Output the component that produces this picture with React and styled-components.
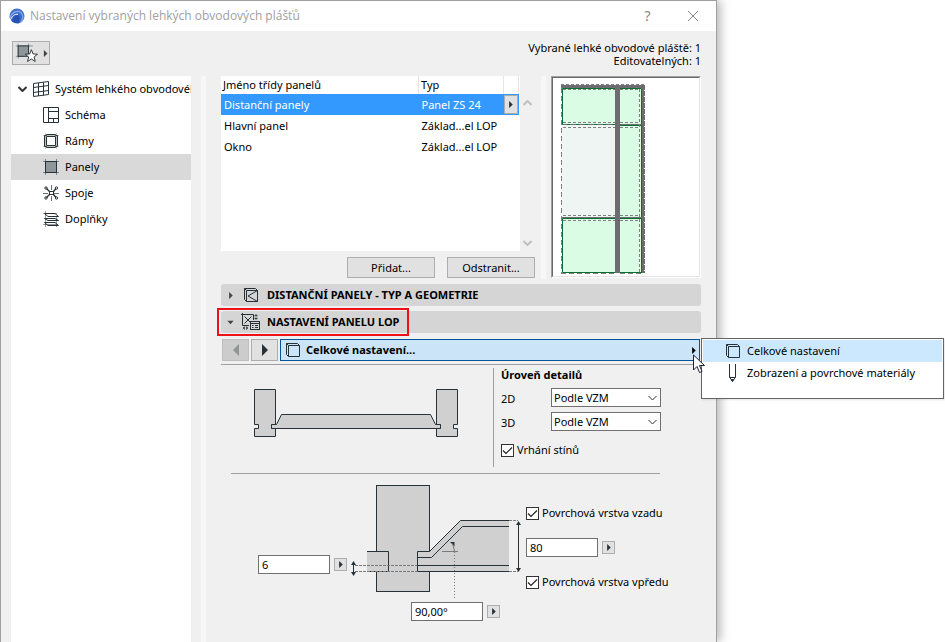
import React from 'react';
import styled, { createGlobalStyle } from 'styled-components';

const INK = '#263238';

const GlobalStyle = createGlobalStyle`
    * {
        box-sizing: border-box;
    }
    body {
        margin: 0;
        background: white;
        color: black;
        font: 11px/14px "Noto Sans", "Open Sans", sans-serif;
    }
    button, input, select {
        font: inherit;
        color: inherit;
        margin: 0;
    }
`;

/* ---------- window ---------- */

const Page = styled.div`
    display: grid;
    grid-template-columns: minmax(0, 1fr) 228px;
    min-height: 100vh;
`;

const Dialog = styled.main`
    display: flex;
    flex-direction: column;
    background: #f0f0f0;
    border: 1px solid #a0a0a0;
    border-bottom: none;
    box-shadow: 3px 0 10px rgba(0, 0, 0, 0.3);
`;

const TitleBar = styled.header`
    display: flex;
    align-items: center;
    height: 30px;
    padding: 0 15px 0 8px;
    background: white;
    color: #a0a0a0;
`;

const Title = styled.h1`
    flex: 1;
    margin: 0 0 0 5px;
    font-family: "Open Sans", "Noto Sans", sans-serif;
    font-size: 12px;
    font-weight: normal;
    line-height: 16px;
`;

const WindowButton = styled.button`
    display: grid;
    place-items: center;
    width: 17px;
    height: 20px;
    margin-left: 28px;
    padding: 0;
    border: none;
    background: none;
    color: #858585;
    font-size: 14px;
`;

const Toolbar = styled.div`
    display: flex;
    justify-content: space-between;
    align-items: flex-start;
    height: 45px;
    padding: 10px 15px 0 11px;
`;

const FavoriteButton = styled.button`
    display: flex;
    align-items: center;
    gap: 3px;
    width: 38px;
    height: 24px;
    padding: 0;
    border: 1px solid #adadad;
    background: #e1e1e1;
    color: #444444;
`;

const Summary = styled.p`
    margin: 0;
    line-height: 13px;
    text-align: right;
`;

const Body = styled.div`
    display: flex;
    flex: 1;
    padding: 0 15px 0 10px;
`;

const Divider = styled.div`
    width: 5px;
    background: #f7f7f7;
`;

/* ---------- tree ---------- */

const Tree = styled.nav`
    width: 180px;
    margin-right: 10px;
    overflow: hidden;
    background: white;
`;

const TreeItem = styled.a`
    display: flex;
    align-items: center;
    gap: 6px;
    height: 26px;
    padding-left: ${props => (props.$root ? '7px' : '32px')};
    background: ${props => (props.$active ? '#d9d9d9' : 'none')};
    color: inherit;
    text-decoration: none;
    white-space: nowrap;
    svg {
        flex: none;
    }
`;

/* ---------- class list ---------- */

const Main = styled.section`
    flex: 1;
    min-width: 0;
    margin-left: 15px;
`;

const TopPanel = styled.div`
    display: flex;
    height: 203px;
    gap: 5px;
`;

const ListColumn = styled.div`
    flex: 1;
    margin-right: 1px;
`;

const ListArea = styled.div`
    display: flex;
    height: 175px;
`;

const ListBox = styled.div`
    flex: 1;
    padding-right: 1px;
    background: white;
`;

const ClassTable = styled.table`
    width: 100%;
    table-layout: fixed;
    border-collapse: collapse;
    text-align: left;
`;

const NameCol = styled.col``;
const TypeCol = styled.col`
    width: 85px;
`;
const MenuCol = styled.col`
    width: 15px;
`;

const HeadCell = styled.th`
    height: 18px;
    padding: 0 2px;
    border-right: 1px solid #e5e5e5;
    font-weight: normal;
`;

const ClassRow = styled.tr`
    height: 21px;
    background: ${props => (props.$selected ? '#3399ff' : 'none')};
    color: ${props => (props.$selected ? 'white' : 'black')};
`;

const Cell = styled.td`
    padding: 0 0 0 3px;
    white-space: nowrap;
`;

const MenuCell = styled.td`
    padding: 0;
`;

const ScrollBar = styled.div`
    display: flex;
    flex-direction: column;
    justify-content: space-between;
    align-items: center;
    width: 15px;
    padding: 24px 0 5px;
`;

const Buttons = styled.div`
    display: flex;
    justify-content: flex-end;
    gap: 12px;
    margin-top: 6px;
`;

const PushButton = styled.button`
    width: 88px;
    height: 21px;
    padding: 0;
    border: 1px solid #adadad;
    background: #e1e1e1;
`;

const ArrowButton = styled.button`
    display: grid;
    place-items: center;
    width: ${props => props.$width || '13px'};
    height: ${props => props.$height || '13px'};
    padding: 0;
    border: 1px solid ${props => (props.disabled ? '#bfbfbf' : '#adadad')};
    background: ${props => (props.disabled ? '#cccccc' : '#e1e1e1')};
    color: ${props => (props.disabled ? '#8f9496' : INK)};
`;

const Preview = styled.div`
    width: 150px;
    height: 202px;
    border: 1px solid;
    border-color: #a0a0a0 white white #a0a0a0;
    background: white;
`;

const PreviewInner = styled.div`
    height: 100%;
    border: 1px solid;
    border-color: #696969 #e3e3e3 #e3e3e3 #696969;
    svg {
        display: block;
    }
`;

/* ---------- collapsible sections ---------- */

const SectionHeader = styled.button`
    position: relative;
    display: flex;
    align-items: center;
    width: 100%;
    height: 22px;
    margin-top: 5px;
    padding: 0 0 0 5px;
    border: none;
    border-radius: 3px;
    background: #d5d5d5;
    font-weight: bold;
    text-align: left;
    > svg {
        color: #444444;
    }
`;

const SectionIcon = styled.span`
    display: grid;
    place-items: center;
    width: 20px;
    margin: 0 6px;
`;

const Highlight = styled.span`
    position: absolute;
    inset: -3px auto -3px -4px;
    width: 192px;
    border: 2px solid #f01018;
`;

const PageNav = styled.div`
    display: flex;
    gap: 2px;
    margin: 6px 1px 0;
    padding-bottom: 3px;
`;

const PagePicker = styled.div`
    position: relative;
    flex: 1;
`;

const PageButton = styled.button`
    display: flex;
    align-items: center;
    width: 100%;
    height: 22px;
    padding: 0 1px 0 5px;
    border: 1px solid #005499;
    background: #cce4f7;
    font-weight: bold;
    text-align: left;
    span {
        flex: 1;
        padding-left: 5px;
    }
`;

const Menu = styled.div`
    position: absolute;
    top: -1px;
    left: calc(100% + 1px);
    z-index: 2;
    width: 243px;
    height: 61px;
    padding: 1px;
    border: 1px solid #646464;
    background: white;
    box-shadow: 1px 1px 2px rgba(0, 0, 0, 0.1);
`;

const MenuItem = styled.button`
    display: flex;
    align-items: center;
    gap: 6px;
    width: 100%;
    height: 22px;
    padding: 0 0 0 23px;
    border: none;
    background: ${props => (props.$active ? '#cce8ff' : 'none')};
`;

const Pointer = styled.svg`
    position: absolute;
    top: 15px;
    right: -6px;
    z-index: 3;
`;

/* ---------- settings ---------- */

const Details = styled.div`
    display: flex;
    padding-top: 3px;
    border-top: 1px solid #a0a0a0;
`;

const SectionDrawing = styled.div`
    width: 272px;
    padding: 19px 0 0 31px;
`;

const DetailLevel = styled.fieldset`
    min-width: 0;
    height: 99px;
    margin: 0;
    padding: 0 0 0 7px;
    border: none;
    border-left: 1px solid #a0a0a0;
`;

const Legend = styled.legend`
    float: left;
    margin-bottom: 6px;
    padding: 0;
    font-weight: bold;
`;

const LevelRow = styled.label`
    display: flex;
    clear: both;
    align-items: center;
    height: 19px;
    margin-bottom: 5px;
`;

const LevelName = styled.span`
    width: 50px;
    padding-top: 2px;
`;

const SelectWrap = styled.span`
    display: grid;
    align-items: center;
    width: 110px;
    > * {
        grid-area: 1 / 1;
    }
    svg {
        justify-self: end;
        margin-right: 4px;
        pointer-events: none;
    }
`;

const Select = styled.select`
    appearance: none;
    width: 100%;
    height: 19px;
    padding: 0 16px 0 2px;
    border: 1px solid #707070;
    border-radius: 0;
    background: white;
`;

const CheckLabel = styled.label`
    display: flex;
    align-items: center;
    gap: 3px;
    height: 14px;
    margin-top: ${props => (props.$spaced ? '12px' : '0')};
    white-space: nowrap;
`;

const CheckBox = styled.span`
    display: grid;
    place-items: center;
    > * {
        grid-area: 1 / 1;
    }
    input {
        appearance: none;
        width: 13px;
        height: 13px;
        border: 1px solid #333333;
        background: white;
    }
    svg {
        visibility: hidden;
        pointer-events: none;
    }
    input:checked + svg {
        visibility: visible;
    }
`;

const Rule = styled.hr`
    height: 1px;
    margin: 6px 41px 10px 10px;
    border: none;
    background: #a0a0a0;
`;

const JointPanel = styled.div`
    display: flex;
    padding-left: 37px;
`;

const OffsetColumn = styled.div`
    width: 92px;
    padding-top: 71px;
`;

const JointColumn = styled.div`
    width: 172px;
    svg {
        display: block;
    }
`;

const AngleRow = styled.div`
    margin: 2px 0 0 61px;
`;

const LayerColumn = styled.div`
    display: flex;
    flex-direction: column;
    gap: 18px;
    padding: 22px 0 0 4px;
`;

const FieldRow = styled.div`
    display: flex;
    align-items: center;
    gap: 4px;
`;

const TextInput = styled.input`
    width: 72px;
    height: 19px;
    padding: 0 3px;
    border: 1px solid #707070;
    background: white;
`;

/* ---------- icons ---------- */

const Icon = ({ size = 16, children }) => (
    <svg width={size} height={size} viewBox={`0 0 ${size} ${size}`} fill="none" stroke={INK} aria-hidden="true">
        {children}
    </svg>
);

const Triangle = ({ dir = 'right', big }) => {
    const points = {
        right: big ? '4,1 10,7 4,13' : '3,1 7,5 3,9',
        left: '10,1 4,7 10,13',
        down: '1,3 8,3 4.5,7',
    };
    const size = big ? 14 : 9;
    return (
        <svg width={size} height={size} viewBox={big ? '0 0 14 14' : '0 0 9 10'} fill="currentColor" aria-hidden="true">
            <polygon points={points[dir]} />
        </svg>
    );
};

const Chevron = ({ up, color = '#333333', strokeWidth = 1 }) => (
    <svg width="9" height="6" viewBox="0 0 9 6" fill="none" stroke={color} strokeWidth={strokeWidth} aria-hidden="true">
        <path d={up ? 'M0.5 5 L4.5 1 L8.5 5' : 'M0.5 1 L4.5 5 L8.5 1'} />
    </svg>
);

const LogoIcon = () => (
    <svg width="16" height="16" viewBox="0 0 16 16" aria-hidden="true">
        <circle cx="8" cy="8" r="7.5" fill="#3f6bc9" />
        <path d="M1 10C3 4 8 1.500 12 4.500C14.500 7 14.500 11 12 14" fill="none" stroke="#7fa6ea" strokeWidth="1.500" />
        <path d="M3 13.500C4.500 9 7 6 9.500 7.500C11.500 9 11 12 9.500 15.500Z" fill="#2750b4" />
        <path d="M0.500 13C3 8.500 6 5 9 6.500" fill="none" stroke="white" />
    </svg>
);

const FavoriteIcon = () => (
    <Icon size={26}>
        <path d="M3 5.500H21M5.500 3V19M16.500 3V8M3 16.500H11" strokeWidth="0.500" />
        <rect x="5.500" y="5.500" width="11" height="11" fill="#8f9699" />
        <path
            d="M19.500 9.500L21.300 14L26 14.300L22.400 17.200L23.600 22L19.500 19.400L15.400 22L16.600 17.200L13 14.300L17.700 14Z"
            fill="white"
        />
    </Icon>
);

const SystemIcon = () => (
    <Icon>
        <path d="M0.500 2.500L15.500 0.500V13.500L0.500 15.500ZM5.500 2V15M10.500 1.500V14.500M0.500 6.500L15.500 4.500M0.500 11.500L15.500 9.500" />
    </Icon>
);

const SchemeIcon = () => (
    <Icon>
        <path d="M0.500 0.500H15.500V15.500H0.500ZM5.500 0.500V15.500M5.500 4.500H15.500M5.500 11.500H15.500M10.500 11.500V15.500" />
    </Icon>
);

const FramesIcon = () => (
    <Icon>
        <path d="M3.500 3.500H12.500V12.500H3.500ZM1.500 2.500V13.500M14.500 2.500V13.500M3.500 1.500H12.500M3.500 14.500H12.500M1.500 2.500H3.500V1.500M14.500 2.500H12.500V1.500M1.500 13.500H3.500V14.500M14.500 13.500H12.500V14.500" />
        <path d="M0 2.500H16M0 13.500H16M2.500 0V16M13.500 0V16" strokeWidth="0.300" />
    </Icon>
);

const PanelsIcon = () => (
    <Icon>
        <path d="M0 2.500H16M0 13.500H16M2.500 0V16M13.500 0V16" strokeWidth="0.500" />
        <rect x="2.500" y="2.500" width="11" height="11" fill="#8f9699" />
    </Icon>
);

const JointsIcon = () => (
    <Icon>
        <path d="M8.500 0V5M8.500 11V16M0 8.500H5M11 8.500H16" strokeWidth="0.700" />
        <rect x="6.500" y="6.500" width="4" height="3" />
        <path d="M6.500 6.500L3.500 3.500M10.500 6.500L13 3.500M6.500 9.500L3.500 12.500M10.500 9.500L13 12.500" strokeWidth="1.400" />
        <circle cx="3" cy="3" r="1.200" />
        <circle cx="13.500" cy="3" r="1.200" />
        <circle cx="3" cy="13" r="1.200" />
        <circle cx="13.500" cy="13" r="1.200" />
    </Icon>
);

const AccessoriesIcon = () => (
    <Icon>
        <path d="M1.500 2.500H12L15.500 5.500H5ZM1.500 7.500H12L15.500 9.500H5ZM1.500 11.500H12L15.500 14.500H5Z" />
        <path d="M0 2.500H14M2.500 0V16M0 13.500H14M13.500 5V16" strokeWidth="0.500" />
    </Icon>
);

const GeometryIcon = () => (
    <Icon>
        <path d="M3.500 3.500H14.500V14.500H3.500ZM3.500 3.500L1.500 1.500H12.500L14.500 3.500M1.500 1.500V12.500L3.500 14.500M14.500 3.500L5 9L14.500 14.500" />
    </Icon>
);

const PanelSettingsIcon = () => (
    <svg width="20" height="18" viewBox="0 0 20 18" fill="none" stroke={INK} aria-hidden="true">
        <path d="M1.500 1.500H12.500M1.500 1.500V12.500H8M12.500 1.500V7M3.500 3.500L10.500 10.500M10.500 3.500L3.500 10.500M0 1.500H3M1.500 0V3" />
        <path d="M15 1.500L16.500 3H13.500ZM15 6.500L16.500 5H13.500ZM2 15L3.500 13.500V16.500ZM7 15L5.500 13.500V16.500Z" fill={INK} strokeWidth="0.500" />
        <rect x="9.500" y="8.500" width="9" height="8" />
        <path d="M9.500 10.500H18.500M11 12.500H12.500M14 12.500H17M11 14.500H12.500M14 14.500H17" />
    </svg>
);

const BoxIcon = () => (
    <Icon size={15}>
        <path d="M2.500 2.500H13.500V13.500H2.500ZM2.500 2.500L0.500 0.500H11.500L13.500 2.500M0.500 0.500V11.500L2.500 13.500" />
    </Icon>
);

const PenIcon = () => (
    <svg width="15" height="18" viewBox="0 0 15 18" fill="none" stroke={INK} aria-hidden="true">
        <path d="M3.500 0V13L6.500 17.500L9.500 13V0M3.500 13.500H9.500" />
        <path d="M5.500 15.500H7.500L6.500 17.500Z" fill={INK} />
    </svg>
);

const CloseIcon = () => (
    <svg width="12" height="12" viewBox="0 0 12 12" stroke="#858585" aria-hidden="true">
        <path d="M1 1L11 11M11 1L1 11" />
    </svg>
);

/* ---------- drawings ---------- */

const WallPreview = () => (
    <svg width="100%" height="198" viewBox="0 0 146 198" preserveAspectRatio="xMinYMin meet" role="img" aria-label="Náhled">
        <g fill="#dafce5">
            <rect x="9" y="10" width="53" height="36" />
            <rect x="67" y="10" width="22" height="184" />
            <rect x="9" y="140" width="53" height="54" />
            <rect x="9" y="47" width="53" height="92" fill="#eff5f2" />
        </g>
        <g fill="#6c6c71">
            <rect x="8" y="7" width="83" height="3" />
            <rect x="89" y="7" width="2" height="188" />
            <rect x="62" y="7" width="5" height="188" />
        </g>
        <path
            d="M62 10.500H9.500V46M67 10.500H88.500V194.500M62 140.500H9.500V194.500H62M67 194.500H89M67 47.500H89M67 140.500H89"
            fill="none"
            stroke="#0b6f31"
        />
        <path d="M9 46.500H89M9 139.500H89" stroke="#6c6c71" />
        <path d="M14 46.500H62" stroke="#0b6f31" strokeDasharray="3 6" />
        <g fill="none" stroke="#808080" strokeDasharray="3 2">
            <path d="M10 11.500H62M67 11.500H86M10 44.500H62M67 44.500H86M10 49.500H62M67 49.500H86" />
            <path d="M10 137.500H62M67 137.500H86M10 142.500H62M67 142.500H86M86.500 11V194" />
            <path d="M8 6.500H92" />
            <path d="M8.500 10V196M8 195.500H62M67 195.500H89" strokeDasharray="5 3" />
            <path d="M91.500 7V195" stroke="#6c6c71" strokeDasharray="5 1" />
        </g>
    </svg>
);

const PanelSection = () => (
    <svg width="210" height="52" viewBox="0 0 210 52" fill="#d0d0d0" stroke={INK} role="img" aria-label="Řez panelem">
        <path d="M2.500 2.500H23.500V37.500H19.500V41.500H23.500V49.500H2.500V41.500H6.500V37.500H2.500Z" />
        <path d="M184.500 2.500H205.500V37.500H201.500V41.500H205.500V49.500H184.500V41.500H188.500V37.500H184.500Z" />
        <path d="M19.500 37.500H24.500L29.500 27.500H178.500L183.500 37.500H188.500V41.500H19.500Z" />
    </svg>
);

const JointSection = () => (
    <svg width="172" height="116" viewBox="0 0 172 116" fill="none" stroke={INK} role="img" aria-label="Detail napojení">
        <rect x="26.500" y="1.500" width="53" height="106" fill="#d0d0d0" />
        <rect x="17" y="67" width="22" height="21" fill="#d0d0d0" stroke="none" />
        <path d="M17 67.500H38.500V87.500H17" />
        <path d="M159 36.500H110.500L79.500 67.500H67.500V87.500H159" fill="#d0d0d0" />
        <path d="M67.500 73.500H81.500L112.500 42.500H159M67.500 81.500H159" />
        <path d="M5 81.500H67M5 87.500H67M159 36.500H168M159 87.500H168" stroke="#7a7a7a" strokeDasharray="3 1" />
        <path d="M3.500 80V89M168.500 39V86" />
        <g fill={INK} stroke="none">
            <path d="M3.500 77L6 81H1ZM3.500 92L6 88H1ZM168.500 37L171 41H166ZM168.500 88L171 84H166Z" />
            <path d="M100 58H104.500V62.500Z" />
        </g>
        <path d="M102.500 59.500L104.500 67M92 67.500H108" stroke="#7a7a7a" />
        <path d="M104.500 68V115" stroke="#7a7a7a" strokeDasharray="1 2" />
    </svg>
);

/* ---------- parts ---------- */

const Check = ({ label, spaced }) => (
    <CheckLabel $spaced={spaced}>
        <CheckBox>
            <input type="checkbox" defaultChecked />
            <svg width="13" height="13" viewBox="0 0 13 13" fill="none" stroke="#222222" strokeWidth="1.200">
                <path d="M2 6.500L5 9.500L11 3.500" />
            </svg>
        </CheckBox>
        {label}
    </CheckLabel>
);

const Level = ({ name }) => (
    <LevelRow>
        <LevelName>{name}</LevelName>
        <SelectWrap>
            <Select>
                <option>Podle VZM</option>
            </Select>
            <Chevron />
        </SelectWrap>
    </LevelRow>
);

const Field = ({ label, value }) => (
    <FieldRow>
        <TextInput type="text" aria-label={label} defaultValue={value} />
        <ArrowButton type="button" aria-label={`${label}: možnosti`}>
            <Triangle />
        </ArrowButton>
    </FieldRow>
);

const treeItems = [
    { name: 'Schéma', icon: <SchemeIcon /> },
    { name: 'Rámy', icon: <FramesIcon /> },
    { name: 'Panely', icon: <PanelsIcon />, active: true },
    { name: 'Spoje', icon: <JointsIcon /> },
    { name: 'Doplňky', icon: <AccessoriesIcon /> },
];

const panelClasses = [
    { name: 'Distanční panely', type: 'Panel ZS 24', selected: true },
    { name: 'Hlavní panel', type: 'Základ...el LOP' },
    { name: 'Okno', type: 'Základ...el LOP' },
];

const App = () => {
    return (
        <Page>
            <GlobalStyle />
            <Dialog>
                <TitleBar>
                    <LogoIcon />
                    <Title>Nastavení vybraných lehkých obvodových plášťů</Title>
                    <WindowButton type="button">?</WindowButton>
                    <WindowButton type="button" aria-label="Zavřít">
                        <CloseIcon />
                    </WindowButton>
                </TitleBar>
                <Toolbar>
                    <FavoriteButton type="button" aria-label="Oblíbené">
                        <FavoriteIcon />
                        <Triangle />
                    </FavoriteButton>
                    <Summary>
                        Vybrané lehké obvodové pláště: 1<br />
                        Editovatelných: 1
                    </Summary>
                </Toolbar>
                <Body>
                    <Tree>
                        <TreeItem href="#system" $root>
                            <Chevron color="#333333" strokeWidth={2} />
                            <SystemIcon />
                            Systém lehkého obvodového pláště
                        </TreeItem>
                        {treeItems.map(item => (
                            <TreeItem key={item.name} href="#" $active={item.active}>
                                {item.icon}
                                {item.name}
                            </TreeItem>
                        ))}
                    </Tree>
                    <Divider />
                    <Main>
                        <TopPanel>
                            <ListColumn>
                                <ListArea>
                                    <ListBox>
                                        <ClassTable>
                                            <colgroup>
                                                <NameCol />
                                                <TypeCol />
                                                <MenuCol />
                                            </colgroup>
                                            <thead>
                                                <tr>
                                                    <HeadCell>Jméno třídy panelů</HeadCell>
                                                    <HeadCell>Typ</HeadCell>
                                                    <HeadCell />
                                                </tr>
                                            </thead>
                                            <tbody>
                                                {panelClasses.map(row => (
                                                    <ClassRow key={row.name} $selected={row.selected}>
                                                        <Cell>{row.name}</Cell>
                                                        <Cell>{row.type}</Cell>
                                                        <MenuCell>
                                                            {row.selected && (
                                                                <ArrowButton type="button" $width="14px" $height="19px" aria-label="Změnit typ">
                                                                    <Triangle />
                                                                </ArrowButton>
                                                            )}
                                                        </MenuCell>
                                                    </ClassRow>
                                                ))}
                                            </tbody>
                                        </ClassTable>
                                    </ListBox>
                                    <ScrollBar>
                                        <Chevron up color="#bfbfbf" strokeWidth={2} />
                                        <Chevron color="#bfbfbf" strokeWidth={2} />
                                    </ScrollBar>
                                </ListArea>
                                <Buttons>
                                    <PushButton type="button">Přidat...</PushButton>
                                    <PushButton type="button">Odstranit...</PushButton>
                                </Buttons>
                            </ListColumn>
                            <Divider />
                            <Preview>
                                <PreviewInner>
                                    <WallPreview />
                                </PreviewInner>
                            </Preview>
                        </TopPanel>

                        <SectionHeader type="button">
                            <Triangle />
                            <SectionIcon>
                                <GeometryIcon />
                            </SectionIcon>
                            DISTANČNÍ PANELY - TYP A GEOMETRIE
                        </SectionHeader>
                        <SectionHeader type="button">
                            <Triangle dir="down" />
                            <SectionIcon>
                                <PanelSettingsIcon />
                            </SectionIcon>
                            NASTAVENÍ PANELU LOP
                            <Highlight />
                        </SectionHeader>

                        <PageNav>
                            <ArrowButton type="button" disabled $width="27px" $height="22px" aria-label="Předchozí">
                                <Triangle dir="left" big />
                            </ArrowButton>
                            <ArrowButton type="button" $width="27px" $height="22px" aria-label="Další">
                                <Triangle big />
                            </ArrowButton>
                            <PagePicker>
                                <PageButton type="button">
                                    <BoxIcon />
                                    <span>Celkové nastavení...</span>
                                    <Triangle />
                                </PageButton>
                                <Menu>
                                    <MenuItem type="button" $active>
                                        <BoxIcon />
                                        Celkové nastavení
                                    </MenuItem>
                                    <MenuItem type="button">
                                        <PenIcon />
                                        Zobrazení a povrchové materiály
                                    </MenuItem>
                                </Menu>
                                <Pointer width="13" height="20" viewBox="0 0 13 20" fill="white" stroke="#222233" aria-hidden="true">
                                    <path d="M0.500 1V16L4 12.500L6.500 18.500L9 17.500L6.500 11.500H11.500Z" />
                                </Pointer>
                            </PagePicker>
                        </PageNav>

                        <Details>
                            <SectionDrawing>
                                <PanelSection />
                            </SectionDrawing>
                            <DetailLevel>
                                <Legend>Úroveň detailů</Legend>
                                <Level name="2D" />
                                <Level name="3D" />
                                <Check label="Vrhání stínů" spaced />
                            </DetailLevel>
                        </Details>
                        <Rule />
                        <JointPanel>
                            <OffsetColumn>
                                <Field label="Odsazení" value="6" />
                            </OffsetColumn>
                            <JointColumn>
                                <JointSection />
                                <AngleRow>
                                    <Field label="Úhel" value="90,00°" />
                                </AngleRow>
                            </JointColumn>
                            <LayerColumn>
                                <Check label="Povrchová vrstva vzadu" />
                                <Field label="Tloušťka" value="80" />
                                <Check label="Povrchová vrstva vpředu" />
                            </LayerColumn>
                        </JointPanel>
                    </Main>
                </Body>
            </Dialog>
        </Page>
    );
};

export default App;
